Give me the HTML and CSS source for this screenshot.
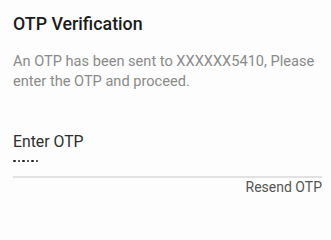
FILE: index.html
```html
<!DOCTYPE html>
<html lang="en">
<head>
<meta charset="utf-8">
<title>OTP Verification</title>
<link rel="stylesheet" href="styles.css">
</head>
<body>
<main class="screen">
  <h1 class="title">OTP Verification</h1>
  <p class="desc">An OTP has been sent to XXXXXX5410, Please enter the OTP and proceed.</p>
  <div class="field">
    <label class="label">Enter OTP</label>
    <div class="dots"><span></span><span></span><span></span><span></span><span></span><span></span></div>
  </div>
  <div class="actions"><span class="resend">Resend OTP</span></div>
</main>
</body>
</html>
```
FILE: styles.css
```css
html, body {
  margin: 0;
  padding: 0;
  background: #fcfdfc;
}
body {
  font-family: Roboto, "Noto Sans", sans-serif;
  width: 331px;
  height: 208px;
  overflow: hidden;
}
.screen {
  padding: 11.5px 9px 0 13px;
}
.title {
  margin: 0;
  font-size: 17.8px;
  font-weight: 500;
  line-height: 24px;
  color: #1b1b1b;
}
.desc {
  margin: 15.5px 0 0;
  font-size: 14.6px;
  line-height: 20px;
  color: #8a8a8a;
}
.field {
  margin-top: 41px;
  padding-bottom: 13.5px;
  border-bottom: 2px solid #e2e2e2;
}
.label {
  display: block;
  font-size: 15.8px;
  line-height: 20px;
  color: #2e2e2e;
}
.dots {
  display: flex;
  gap: 2px;
  margin-top: 7.6px;
  height: 2.5px;
}
.dots span {
  width: 2.5px;
  height: 2.5px;
  border-radius: 50%;
  background: #222;
}
.actions {
  display: flex;
  justify-content: flex-end;
}
.resend {
  font-size: 14px;
  line-height: 18px;
  color: #555;
}
```
